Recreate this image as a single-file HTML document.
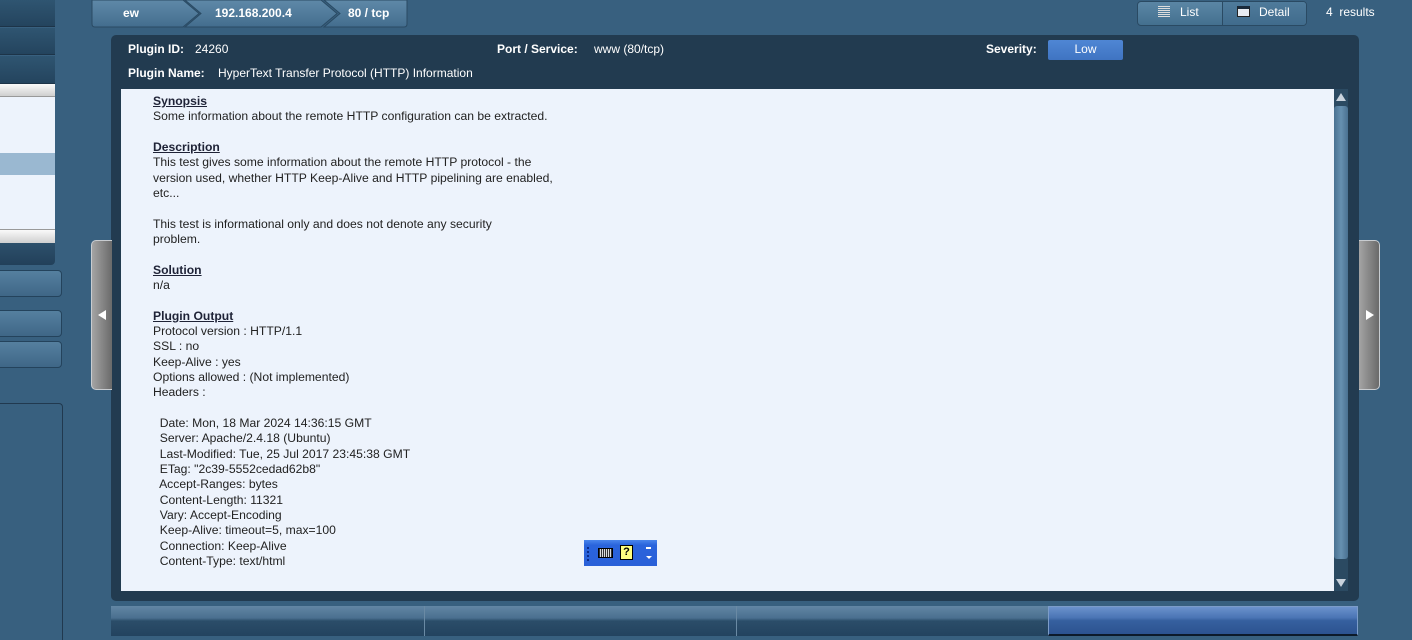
<!DOCTYPE html>
<html><head><meta charset="utf-8"><style>
*{margin:0;padding:0;box-sizing:border-box}
html{width:1412px;height:640px;overflow:hidden}
body{width:1412px;height:640px;background:#38607f;position:relative;overflow:hidden;font-family:"Liberation Sans",sans-serif;font-size:12px}
.a{position:absolute}
.lrow{left:0;width:55px;height:27px;background:linear-gradient(#2f5571,#24445e);border-bottom:1px solid #1d3448}
.lbtn{left:-6px;width:68px;height:27px;border:1px solid #24435c;border-radius:4px;background:linear-gradient(#55809f,#3f6787)}
.crumb{top:0;height:27px;color:#fff;font-weight:bold;font-size:12px;line-height:26px}
#txt{left:153px;top:94px;line-height:15.33px;color:#222;white-space:pre;font-size:12.15px}
#txt b{color:#1e2236;text-decoration:underline}
.side{width:21px;height:150px;top:240px;border:1px solid #c8ccd0;background:linear-gradient(90deg,#a4a4a4,#6a6a6a)}
</style></head><body>
<div class="a lrow" style="top:0"></div>
<div class="a lrow" style="top:28px"></div>
<div class="a lrow" style="top:56px;height:28px"></div>
<div class="a" style="left:0;top:84px;width:55px;height:158px;background:#edf3fc"></div>
<div class="a" style="left:0;top:84px;width:55px;height:13px;background:linear-gradient(#fafafa,#cfcfcf);border-bottom:1px solid #999"></div>
<div class="a" style="left:0;top:153px;width:55px;height:22px;background:#9ab8d1"></div>
<div class="a" style="left:0;top:229px;width:55px;height:14px;background:linear-gradient(#fafafa,#cfcfcf);border-top:1px solid #999"></div>
<div class="a" style="left:0;top:243px;width:55px;height:22px;background:linear-gradient(#2d506b,#22405a);border-radius:0 0 4px 0"></div>
<div class="a lbtn" style="top:270px"></div>
<div class="a lbtn" style="top:310px"></div>
<div class="a lbtn" style="top:341px"></div>
<div class="a" style="left:-4px;top:403px;width:67px;height:237px;border:1px solid #21394f;border-bottom:none;border-radius:4px 4px 0 0"></div>
<svg class="a" style="left:91px;top:0" width="320" height="28">
<defs><linearGradient id="g" x1="0" y1="0" x2="0" y2="1"><stop offset="0" stop-color="#5f89a8"/><stop offset="1" stop-color="#436d8e"/></linearGradient></defs>
<path d="M4 0H92L108 13.5L92 27H4Q1 27 1 24V0Z" fill="url(#g)" stroke="#2a4a63"/>
<path d="M94 0H230L246 13.5L230 27H94L110 13.5Z" fill="url(#g)" stroke="#2a4a63"/>
<path d="M233 0H316V24Q316 27 313 27H233L249 13.5Z" fill="url(#g)" stroke="#2a4a63"/>
</svg>
<div class="a crumb" style="left:123px">ew</div>
<div class="a crumb" style="left:215px">192.168.200.4</div>
<div class="a crumb" style="left:348px">80 / tcp</div>
<div class="a" style="left:1137px;top:1px;width:170px;height:25px;border:1px solid #2a4a63;border-radius:4px;background:linear-gradient(#5b86a5,#44708f);overflow:hidden">
<div class="a" style="left:84px;top:0;width:1px;height:25px;background:#2a4a63"></div>
<div class="a" style="left:85px;top:0;width:85px;height:25px;background:linear-gradient(#4f7b9b,#3f6a8b)"></div>
</div>
<div class="a" style="left:1158px;top:6px;width:12px;height:11px;background:repeating-linear-gradient(#ddd 0 1px,transparent 1px 2px)"></div>
<div class="a" style="left:1180px;top:5px;color:#fff;font-size:12px">List</div>
<div class="a" style="left:1237px;top:6px;width:13px;height:11px;background:#e8ecf2;border:1px solid #222;border-top:3px solid #1a2a3a"></div>
<div class="a" style="left:1259px;top:5px;color:#fff;font-size:12px">Detail</div>
<div class="a" style="left:1326px;top:5px;color:#fff;font-size:12px">4&nbsp;&nbsp;results</div>
<div class="a" style="left:111px;top:35px;width:1248px;height:566px;background:#223b50;border-radius:5px"></div>
<div class="a" style="left:128px;top:42px;color:#fff;font-weight:bold">Plugin ID:</div>
<div class="a" style="left:195px;top:42px;color:#fff">24260</div>
<div class="a" style="left:497px;top:42px;color:#fff;font-weight:bold">Port / Service:</div>
<div class="a" style="left:594px;top:42px;color:#fff">www (80/tcp)</div>
<div class="a" style="left:986px;top:42px;color:#fff;font-weight:bold">Severity:</div>
<div class="a" style="left:1048px;top:40px;width:75px;height:20px;background:linear-gradient(#4f86d4,#3f74c2);border-radius:2px;color:#fff;text-align:center;line-height:18px">Low</div>
<div class="a" style="left:128px;top:66px;color:#fff;font-weight:bold">Plugin Name:</div>
<div class="a" style="left:218px;top:66px;color:#fff">HyperText Transfer Protocol (HTTP) Information</div>
<div class="a" style="left:121px;top:89px;width:1213px;height:502px;background:#edf3fc"></div>
<div class="a" style="left:1334px;top:89px;width:14px;height:502px;background:#2b4a62"></div>
<div class="a" style="left:1336px;top:93px;width:0;height:0;border-left:5px solid transparent;border-right:5px solid transparent;border-bottom:8px solid #c8d2dc"></div>
<div class="a" style="left:1334px;top:106px;width:14px;height:453px;background:linear-gradient(90deg,#4a7191,#6690b0,#4a7191);border-radius:3px"></div>
<div class="a" style="left:1336px;top:579px;width:0;height:0;border-left:5px solid transparent;border-right:5px solid transparent;border-top:8px solid #c8d2dc"></div>
<div id="txt" class="a"><b>Synopsis</b>
Some information about the remote HTTP configuration can be extracted.

<b>Description</b>
This test gives some information about the remote HTTP protocol - the
version used, whether HTTP Keep-Alive and HTTP pipelining are enabled,
etc...

This test is informational only and does not denote any security
problem.

<b>Solution</b>
n/a

<b>Plugin Output</b>
Protocol version : HTTP/1.1
SSL : no
Keep-Alive : yes
Options allowed : (Not implemented)
Headers :

  Date: Mon, 18 Mar 2024 14:36:15 GMT
  Server: Apache/2.4.18 (Ubuntu)
  Last-Modified: Tue, 25 Jul 2017 23:45:38 GMT
  ETag: "2c39-5552cedad62b8"
  Accept-Ranges: bytes
  Content-Length: 11321
  Vary: Accept-Encoding
  Keep-Alive: timeout=5, max=100
  Connection: Keep-Alive
  Content-Type: text/html</div>
<div class="a" style="left:584px;top:540px;width:73px;height:26px;background:linear-gradient(#4a86ec,#2a64dc 20%,#2a60d8)"></div>
<div class="a" style="left:587px;top:547px;width:2px;height:14px;border-left:2px dotted #0a2a8a"></div>
<div class="a" style="left:598px;top:548px;width:15px;height:10px;background:repeating-linear-gradient(90deg,#333 0 1px,#ddd 1px 2px);border:1px solid #000"></div>
<div class="a" style="left:620px;top:545px;width:13px;height:15px;background:#ffff80;border:1px solid #000;font-size:11px;font-weight:bold;color:#000;text-align:center;line-height:13px">?</div>
<div class="a" style="left:646px;top:547px;width:5px;height:2px;background:#fff"></div>
<div class="a" style="left:646px;top:556px;border-left:3px solid transparent;border-right:3px solid transparent;border-top:3px solid #fff"></div>
<div class="a side" style="left:91px;border-radius:5px 0 0 5px;border-right:none"></div>
<div class="a" style="left:98px;top:310px;border-top:5px solid transparent;border-bottom:5px solid transparent;border-right:8px solid #fff"></div>
<div class="a side" style="left:1359px;border-radius:0 5px 5px 0;border-left:none"></div>
<div class="a" style="left:1366px;top:310px;border-top:5px solid transparent;border-bottom:5px solid transparent;border-left:8px solid #fff"></div>
<div class="a" style="left:111px;top:606px;width:937px;height:30px;background:linear-gradient(#6286a4,#4a6f8f 40%,#2b4d69 50%,#23435f)"></div>
<div class="a" style="left:424px;top:606px;width:1px;height:30px;background:#6a8aa4"></div>
<div class="a" style="left:736px;top:606px;width:1px;height:30px;background:#6a8aa4"></div>
<div class="a" style="left:1048px;top:606px;width:310px;height:30px;background:linear-gradient(#6b92cc,#4a74b4 40%,#36609f 50%,#2c5390);border:1px solid #7c9cc8;border-bottom:2px solid #0c1a2a"></div>
</body></html>
